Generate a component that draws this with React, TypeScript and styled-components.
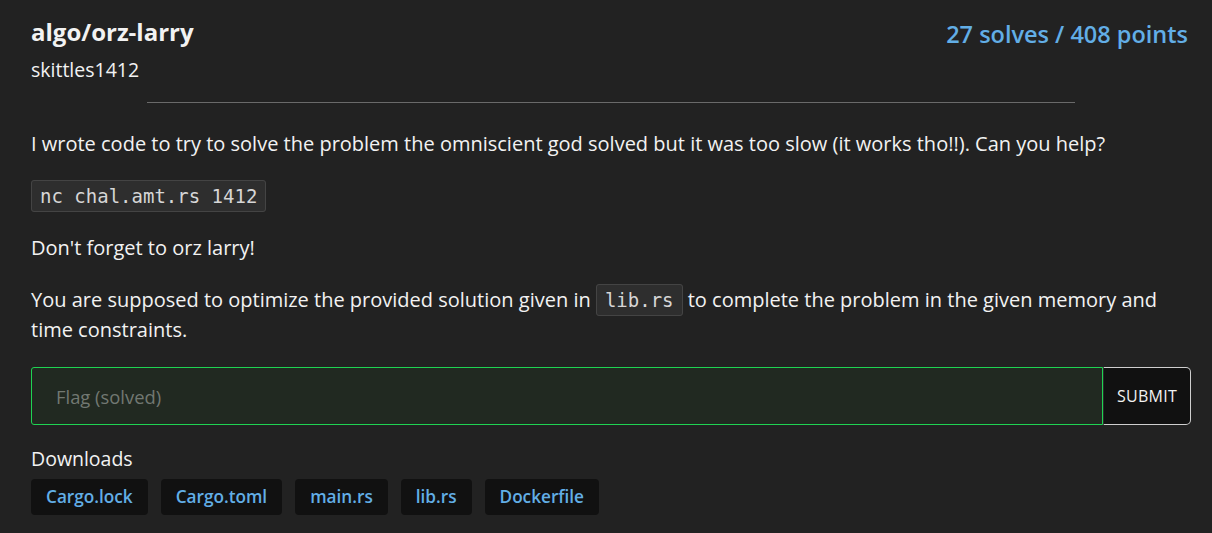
import React from "react";
import styled, { createGlobalStyle } from "styled-components";

const GlobalStyle = createGlobalStyle`
  html, body {
    margin: 0;
    padding: 0;
    background: #222222;
  }
  body {
    font-family: "Open Sans", "Noto Sans", sans-serif;
    color: #f2f2f2;
  }
`;

const files = ["Cargo.lock", "Cargo.toml", "main.rs", "lib.rs", "Dockerfile"];

const App: React.FC = () => {
  return (
    <>
      <GlobalStyle />
      <Page>
        {/* Header */}
        <Header>
          <div>
            <Title>algo/orz-larry</Title>
            <Author>skittles1412</Author>
          </div>
          <Points>27 solves / 408 points</Points>
        </Header>

        <Divider />

        {/* Description */}
        <Description>
          <p>
            I wrote code to try to solve the problem the omniscient god solved
            but it was too slow (it works tho!!). Can you help?
          </p>
          <p>
            <Code>nc chal.amt.rs 1412</Code>
          </p>
          <p>Don't forget to orz larry!</p>
          <p>
            You are supposed to optimize the provided solution given in{" "}
            <Code>lib.rs</Code> to complete the problem in the given memory and
            time constraints.
          </p>
        </Description>

        {/* Flag form */}
        <FlagForm>
          <FlagInput placeholder="Flag (solved)" disabled />
          <SubmitButton>SUBMIT</SubmitButton>
        </FlagForm>

        {/* Downloads */}
        <Downloads>
          <span>Downloads</span>
          <FileList>
            {files.map((f) => (
              <FileLink key={f}>{f}</FileLink>
            ))}
          </FileList>
        </Downloads>
      </Page>
    </>
  );
};

const Page = styled.div`
  width: 1160px;
  padding: 17px 21px 0 31px;
`;

const Header = styled.div`
  display: flex;
  justify-content: space-between;
  align-items: flex-start;
`;

const Title = styled.div`
  font-size: 24px;
  font-weight: 700;
  line-height: 30px;
`;

const Author = styled.div`
  font-size: 19.5px;
  line-height: 28px;
  margin-top: 9px;
`;

const Points = styled.div`
  font-size: 23.5px;
  font-weight: 600;
  line-height: 34px;
  margin-right: 3px;
  color: #62aee6;
`;

const Divider = styled.hr`
  width: 80%;
  margin: 18px auto 0;
  border: none;
  border-top: 1px solid #6a6a6a;
`;

const Description = styled.div`
  margin-top: 26px;
  font-size: 20px;
  line-height: 30px;

  p {
    margin: 0 0 22px;
  }
`;

const Code = styled.code`
  font-family: "DejaVu Sans Mono", "Liberation Mono", monospace;
  font-size: 19px;
  color: #d6d6d6;
  background: #2e2e2e;
  border: 1px solid #444444;
  border-radius: 3px;
  padding: 4px 8px;
`;

const FlagForm = styled.div`
  display: flex;
  margin-top: 3px;
  height: 58px;
`;

const FlagInput = styled.input`
  flex: 1;
  background: #212921;
  border: 1px solid #1fd352;
  border-radius: 3px 0 0 3px;
  padding: 0 24px;
  font-family: "Open Sans", "Noto Sans", sans-serif;
  font-size: 18.4px;
  color: #f2f2f2;
  outline: none;

  &::placeholder {
    color: #727872;
  }
`;

const SubmitButton = styled.button`
  width: 88px;
  background: #111111;
  border: 1px solid #cfcfcf;
  border-left: 1px solid #2a2a2a;
  border-radius: 0 5px 5px 0;
  color: #f2f2f2;
  font-family: "Open Sans", "Noto Sans", sans-serif;
  font-size: 16px;
  letter-spacing: 0.3px;
`;

const Downloads = styled.div`
  margin-top: 21px;
  font-size: 19.5px;
  line-height: 26px;
`;

const FileList = styled.div`
  display: flex;
  gap: 13px;
  margin-top: 7px;
`;

const FileLink = styled.a`
  background: #111111;
  border-radius: 4px;
  padding: 5px 15px;
  font-size: 17.2px;
  font-weight: 600;
  line-height: 26px;
  color: #62aee6;
  cursor: pointer;
`;

export default App;
